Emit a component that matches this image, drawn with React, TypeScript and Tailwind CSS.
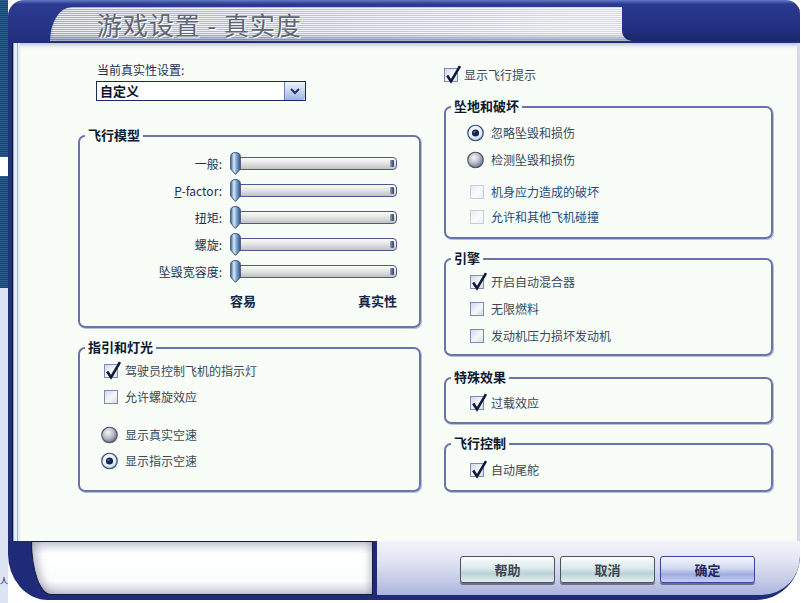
import React from 'react'

const STRIPE_DARK =
  'bg-[repeating-linear-gradient(180deg,#2f5f90_0px,#2f5f90_1px,#1a406b_1px,#1a406b_2px)]'

function Check({ checked, light }: { checked?: boolean; light?: boolean }) {
  return (
    <span
      className={`relative block h-[14px] w-[14px] border ${
        light
          ? 'border-[#c6cde0] bg-[linear-gradient(135deg,#e9ecf4_0%,#fafbfd_55%,#eceff6_100%)]'
          : 'border-[#7d8bb3] bg-[linear-gradient(135deg,#d3d8e8_0%,#f5f7fb_55%,#d6dbea_100%)]'
      }`}
    >
      {checked && (
        <svg className="absolute -top-[4px] left-[1px] overflow-visible" width="15" height="18" viewBox="0 0 15 18">
          <path d="M1.2 10.5 L5 16.3 L14 1.2" fill="none" stroke="#0c1a3c" strokeWidth="2.6" />
        </svg>
      )}
    </span>
  )
}

function Radio({ on }: { on?: boolean }) {
  if (on)
    return (
      <svg width="18" height="18" viewBox="0 0 18 18" className="block">
        <defs>
          <radialGradient id="ron" cx="45%" cy="40%" r="60%">
            <stop offset="0%" stopColor="#ffffff" />
            <stop offset="70%" stopColor="#e4ecf6" />
            <stop offset="100%" stopColor="#9eb4d4" />
          </radialGradient>
        </defs>
        <circle cx="9" cy="9" r="8.2" fill="url(#ron)" stroke="#34507e" strokeWidth="1.3" />
        <circle cx="9" cy="9" r="3.8" fill="#14284e" />
        <circle cx="8" cy="8" r="1.1" fill="#5d7bb0" />
      </svg>
    )
  return (
    <svg width="18" height="18" viewBox="0 0 18 18" className="block">
      <defs>
        <radialGradient id="roff" cx="40%" cy="35%" r="70%">
          <stop offset="0%" stopColor="#f6f7f9" />
          <stop offset="55%" stopColor="#b4b9c4" />
          <stop offset="100%" stopColor="#5d6474" />
        </radialGradient>
      </defs>
      <circle cx="9" cy="9" r="8.2" fill="url(#roff)" stroke="#4c5368" strokeWidth="1.2" />
    </svg>
  )
}

function Thumb() {
  return (
    <svg width="11" height="23" viewBox="0 0 11 23" className="absolute left-0 top-0">
      <defs>
        <linearGradient id="thumb" x1="0" x2="1" y1="0" y2="0">
          <stop offset="0%" stopColor="#4d6d9e" />
          <stop offset="35%" stopColor="#d4ecfa" />
          <stop offset="60%" stopColor="#7fa6d2" />
          <stop offset="100%" stopColor="#3a5688" />
        </linearGradient>
      </defs>
      <path d="M0.7 4.5 Q0.7 0.6 5.5 0.6 Q10.3 0.6 10.3 4.5 L10.3 17 L5.5 22.4 L0.7 17 Z" fill="url(#thumb)" stroke="#3b4c7a" strokeWidth="1" />
    </svg>
  )
}

function Slider({ label }: { label: React.ReactNode }) {
  return (
    <div className="flex h-[27px] items-center">
      <div className="w-[142px] text-right text-[12px] leading-[14px] text-[#1c3152]">{label}</div>
      <div className="relative ml-[8px] h-[23px] w-[167px]">
        <div className="ml-[6px] mt-[5px] flex h-[13px] w-[161px] items-center justify-end rounded-[4px] border border-[#4b5b8b] bg-[linear-gradient(180deg,#fbfbfb_0%,#e6e6e8_45%,#c0c1c6_100%)] pr-[2px]">
          <span className="h-[7px] w-[4px] rounded-[1px] bg-[linear-gradient(90deg,#8fa0c0,#2c3c64)]" />
        </div>
        <Thumb />
      </div>
    </div>
  )
}

function Group({ title, className, children }: { title: string; className: string; children: React.ReactNode }) {
  return (
    <div className={`relative rounded-[7px] border-2 border-[#6a74a9] shadow-[1px_1px_0_#b9c0dc] ${className}`}>
      <span className="absolute -top-[10px] left-[5px] bg-[#f8fdf8] px-[3px] text-[13px] font-bold leading-[16px] text-[#0b1830]">
        {title}
      </span>
      {children}
    </div>
  )
}

function Opt({
  icon,
  label,
  h = 26,
  color = 'text-[#3a4858]',
}: {
  icon: React.ReactNode
  label: string
  h?: number
  color?: string
}) {
  return (
    <div className={`flex items-center gap-[7px] ${h === 27 ? 'h-[27px]' : h === 25 ? 'h-[25px]' : 'h-[26px]'}`}>
      <span className="flex w-[17px] justify-end">{icon}</span>
      <span className={`text-[12px] leading-[14px] ${color}`}>{label}</span>
    </div>
  )
}

function Btn({ label, primary }: { label: string; primary?: boolean }) {
  return (
    <button
      className={`h-[27px] w-[95px] rounded-[3px] border text-[13px] font-bold shadow-[0_2px_0_rgba(40,44,60,0.55)] ${
        primary
          ? 'border-[#3644a2] bg-[linear-gradient(180deg,#f4f6fc_0%,#d2d9f2_45%,#9eacdf_70%,#c8d0ee_100%)] text-[#1f2858]'
          : 'border-[#4d525e] bg-[linear-gradient(180deg,#fafcfc_0%,#dde9eb_45%,#b8d2d6_65%,#e4eef0_100%)] text-[#3d4455]'
      }`}
    >
      {label}
    </button>
  )
}

export default function App() {
  return (
    <div className="flex h-[603px] w-[801px] overflow-hidden bg-white font-['Noto_Sans_CJK_SC','Noto_Sans',sans-serif]">
      {/* desktop behind the window */}
      <div className="flex w-[8px] flex-col overflow-hidden">
        <div className={`h-[157px] ${STRIPE_DARK}`} />
        <div className="h-[19px] bg-white" />
        <div className={`h-[112px] ${STRIPE_DARK}`} />
        <div className="flex flex-1 flex-col justify-end bg-[#dce4f4] pb-[17px]">
          <span className="text-[8px] leading-[10px] text-black">人</span>
        </div>
      </div>

      <div className="flex w-[792px] flex-col">
        {/* title bar */}
        <div className="flex h-[43px] overflow-hidden rounded-tl-[16px] rounded-tr-[14px] bg-[linear-gradient(180deg,#6378c6_0px,#2c3b92_4px,#212e7c_100%)]">
          <div className="w-[42px]" />
          <div className="mt-[7px] flex h-[34px] flex-1 rounded-tl-[22px_34px] bg-[linear-gradient(90deg,rgba(255,255,255,0)_0%,rgba(255,255,255,0.55)_70%),repeating-linear-gradient(180deg,#a7acbc_0px,#a7acbc_1px,#eceef3_1px,#eceef3_2px)] shadow-[inset_0_-4px_4px_rgba(40,50,110,0.35)]">
            <div className="flex-1 pl-[47px] text-[25px] leading-[34px] tracking-[1px] text-[#5d6676] [text-shadow:1px_1px_0_#ffffff]">
              游戏设置 - 真实度
            </div>
            <div className="h-full w-[178px] rounded-bl-[10px] bg-[linear-gradient(180deg,#2a3890_0%,#222f80_70%,#1b2668_100%)]" />
          </div>
        </div>

        {/* body */}
        <div className="flex h-[498px]">
          <div className="w-[4px] bg-[#22307e]" />
          <div className="w-[1px] bg-[#0c1440]" />
          <div className="w-[1px] bg-[#8fa6d6]" />
          <div className="w-[3px] bg-[#e6eefa]" />
          <div className="w-[1px] bg-[#9fb2da]" />
          <div className="w-[2px] bg-[#e8eef4]" />

          <div className="flex flex-1 gap-[23px] bg-[#f8fdf8] pl-[58px] shadow-[inset_0_5px_4px_-3px_rgba(60,70,130,0.35)]">
            {/* left column */}
            <div className="flex w-[343px] flex-col">
              <div className="ml-[19px] mt-[20px] text-[12px] leading-[14px] text-[#1c3152]">当前真实性设置:</div>
              <div className="ml-[18px] mt-[4px] flex h-[20px] w-[210px] border border-[#1b2a5e] bg-white">
                <span className="flex-1 pl-[3px] text-[13px] font-bold leading-[18px] text-[#0a1630]">自定义</span>
                <span className="flex w-[21px] items-center justify-center rounded-r-[3px] border-l border-[#6b82bc] bg-[linear-gradient(180deg,#eef2fb_0%,#c4d2ee_55%,#9cb2e0_100%)]">
                  <svg width="12" height="10" viewBox="0 0 12 10">
                    <path d="M2 3 L6 7 L10 3" fill="none" stroke="#1e3570" strokeWidth="2" />
                  </svg>
                </span>
              </div>

              <Group title="飞行模型" className="mt-[34px] h-[193px]">
                <div className="pt-[13px]">
                  <Slider label="一般:" />
                  <Slider
                    label={
                      <>
                        <span className="underline">P</span>-factor:
                      </>
                    }
                  />
                  <Slider label="扭矩:" />
                  <Slider label="螺旋:" />
                  <Slider label="坠毁宽容度:" />
                </div>
                <div className="mt-[9px] flex w-[317px] justify-between pl-[150px] text-[13px] font-bold leading-[14px] text-[#12264a]">
                  <span>容易</span>
                  <span>真实性</span>
                </div>
              </Group>

              <Group title="指引和灯光" className="mt-[19px] h-[145px]">
                <div className="pl-[21px] pt-[9px]">
                  <Opt icon={<Check checked />} label="驾驶员控制飞机的指示灯" />
                  <Opt icon={<Check />} label="允许螺旋效应" />
                  <div className="h-[12px]" />
                  <Opt icon={<Radio />} label="显示真实空速" />
                  <Opt icon={<Radio on />} label="显示指示空速" />
                </div>
              </Group>
            </div>

            {/* right column */}
            <div className="flex w-[329px] flex-col">
              <div className="mt-[25px] flex h-[14px] items-center gap-[6px]">
                <Check checked />
                <span className="text-[12px] leading-[14px] text-[#3a4858]">显示飞行提示</span>
              </div>

              <Group title="坠地和破坏" className="mt-[24px] h-[133px]">
                <div className="pl-[21px] pt-[11px]">
                  <Opt h={27} icon={<Radio on />} label="忽略坠毁和损伤" />
                  <Opt h={27} icon={<Radio />} label="检测坠毁和损伤" />
                  <div className="h-[6px]" />
                  <Opt h={25} icon={<Check light />} label="机身应力造成的破坏" color="text-[#1f4a7a]" />
                  <Opt h={25} icon={<Check light />} label="允许和其他飞机碰撞" color="text-[#1f4a7a]" />
                </div>
              </Group>

              <Group title="引擎" className="mt-[19px] h-[98px]">
                <div className="pl-[21px] pt-[8px]">
                  <Opt h={27} icon={<Check checked />} label="开启自动混合器" />
                  <Opt h={27} icon={<Check />} label="无限燃料" />
                  <Opt h={27} icon={<Check />} label="发动机压力损坏发动机" />
                </div>
              </Group>

              <Group title="特殊效果" className="mt-[21px] h-[47px]">
                <div className="pl-[21px] pt-[10px]">
                  <Opt h={27} icon={<Check checked />} label="过载效应" />
                </div>
              </Group>

              <Group title="飞行控制" className="mt-[19px] h-[49px]">
                <div className="pl-[21px] pt-[11px]">
                  <Opt h={27} icon={<Check checked />} label="自动尾舵" />
                </div>
              </Group>
            </div>
          </div>

          <div className="w-[3px] bg-[#d6dae6]" />
        </div>

        {/* bottom bar */}
        <div className="flex h-[59px] overflow-hidden rounded-bl-[40px_46px] rounded-br-[44px] bg-[#1f2a78]">
          <div className="w-[23px]" />
          <div className="h-[54px] w-[342px] rounded-bl-[20px_54px] border border-[#161b36] bg-[linear-gradient(180deg,#cfd2de_0%,#ffffff_22%,#fbfcfd_75%,#c9cdda_100%)] shadow-[inset_8px_0_8px_-4px_rgba(120,125,150,0.5),inset_-6px_0_6px_-3px_rgba(120,125,150,0.4)]" />
          <div className="w-[4px]" />
          <div className="flex h-[54px] flex-1 gap-[5px] rounded-br-[38px] bg-[linear-gradient(180deg,#f3f4fa_0%,#e2e5f3_35%,#c3c9e6_75%,#aab3dc_100%)] pl-[83px] pt-[15px]">
            <Btn label="帮助" />
            <Btn label="取消" />
            <Btn label="确定" primary />
          </div>
        </div>
        <div className="flex-1 bg-white" />
      </div>
    </div>
  )
}
